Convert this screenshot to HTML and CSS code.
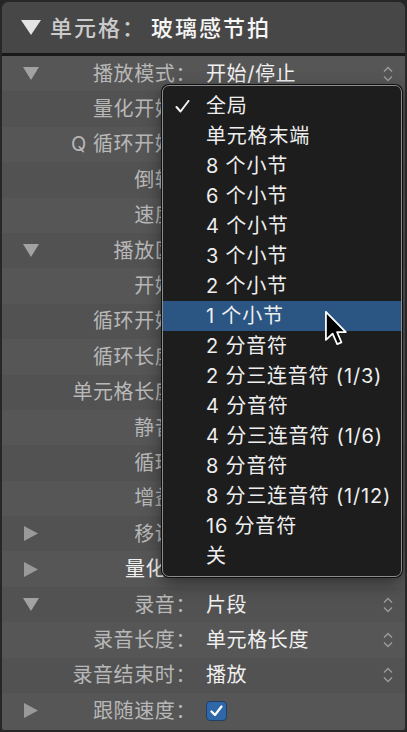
FILE: index.html
```html
<!DOCTYPE html>
<html lang="zh-CN">
<head>
<meta charset="utf-8">
<title>单元格检查器</title>
<link rel="stylesheet" href="styles.css">
</head>
<body>
<div class="panel">
  <div class="header">
    <svg class="h-tri" width="20" height="15" viewBox="0 0 20 15"><polygon points="0,0 20,0 10,15"/></svg>
    <span class="h-label">单元格：</span>
    <span class="h-value">玻璃感节拍</span>
  </div>
  <div class="rows">
    <div class="row"><span class="disc"><svg class="tri-down" width="16" height="13" viewBox="0 0 16 13"><polygon points="0,0 16,0 8,13"/></svg></span><span class="label">播放模式：</span><span class="value">开始/停止</span><span class="updown"><svg width="10" height="18" viewBox="0 0 10 18"><path d="M1 6.5 L5 2.5 L9 6.5 M1 11.5 L5 15.5 L9 11.5"/></svg></span></div>
    <div class="row"><span class="disc"></span><span class="label">量化开始：</span><span class="value"></span><span class="updown"></span></div>
    <div class="row"><span class="disc"></span><span class="label">Q 循环开始：</span><span class="value"></span><span class="updown"></span></div>
    <div class="row"><span class="disc"></span><span class="label">倒转：</span><span class="value"></span><span class="updown"></span></div>
    <div class="row"><span class="disc"></span><span class="label">速度：</span><span class="value"></span><span class="updown"></span></div>
    <div class="row"><span class="disc"><svg class="tri-down" width="16" height="13" viewBox="0 0 16 13"><polygon points="0,0 16,0 8,13"/></svg></span><span class="label">播放区：</span><span class="value"></span><span class="updown"></span></div>
    <div class="row"><span class="disc"></span><span class="label">开始：</span><span class="value"></span><span class="updown"></span></div>
    <div class="row"><span class="disc"></span><span class="label">循环开始：</span><span class="value"></span><span class="updown"></span></div>
    <div class="row"><span class="disc"></span><span class="label">循环长度：</span><span class="value"></span><span class="updown"></span></div>
    <div class="row"><span class="disc"></span><span class="label">单元格长度：</span><span class="value"></span><span class="updown"></span></div>
    <div class="row"><span class="disc"></span><span class="label">静音：</span><span class="value"></span><span class="updown"></span></div>
    <div class="row"><span class="disc"></span><span class="label">循环：</span><span class="value"></span><span class="updown"></span></div>
    <div class="row"><span class="disc"></span><span class="label">增益：</span><span class="value"></span><span class="updown"></span></div>
    <div class="row"><span class="disc"><svg class="tri-right" width="14" height="15" viewBox="0 0 14 15"><polygon points="0,0 14,7.5 0,15"/></svg></span><span class="label">移调：</span><span class="value"></span><span class="updown"></span></div>
    <div class="row"><span class="disc"><svg class="tri-right" width="14" height="15" viewBox="0 0 14 15"><polygon points="0,0 14,7.5 0,15"/></svg></span><span class="label label-group">量化</span><span class="value"></span><span class="updown"><svg width="10" height="18" viewBox="0 0 10 18"><path d="M1 6.5 L5 2.5 L9 6.5 M1 11.5 L5 15.5 L9 11.5"/></svg></span></div>
    <div class="row"><span class="disc"><svg class="tri-down" width="16" height="13" viewBox="0 0 16 13"><polygon points="0,0 16,0 8,13"/></svg></span><span class="label">录音：</span><span class="value">片段</span><span class="updown"><svg width="10" height="18" viewBox="0 0 10 18"><path d="M1 6.5 L5 2.5 L9 6.5 M1 11.5 L5 15.5 L9 11.5"/></svg></span></div>
    <div class="row"><span class="disc"></span><span class="label">录音长度：</span><span class="value">单元格长度</span><span class="updown"><svg width="10" height="18" viewBox="0 0 10 18"><path d="M1 6.5 L5 2.5 L9 6.5 M1 11.5 L5 15.5 L9 11.5"/></svg></span></div>
    <div class="row"><span class="disc"></span><span class="label">录音结束时：</span><span class="value">播放</span><span class="updown"><svg width="10" height="18" viewBox="0 0 10 18"><path d="M1 6.5 L5 2.5 L9 6.5 M1 11.5 L5 15.5 L9 11.5"/></svg></span></div>
    <div class="row"><span class="disc"><svg class="tri-right" width="14" height="15" viewBox="0 0 14 15"><polygon points="0,0 14,7.5 0,15"/></svg></span><span class="label">跟随速度：</span><span class="value"><span class="checkbox"><svg width="13" height="12" viewBox="0 0 13 12"><path d="M1.5 6.5 L5 10 L11.5 1.5"/></svg></span></span><span class="updown"></span></div>
  </div>

  <div class="menu">
    <div class="item"><span class="check"><svg width="15" height="13" viewBox="0 0 15 13"><path d="M1.5 7 L5.5 11.5 L13.5 1"/></svg></span><span>全局</span></div>
    <div class="item"><span class="check"></span><span>单元格末端</span></div>
    <div class="item"><span class="check"></span><span>8 个小节</span></div>
    <div class="item"><span class="check"></span><span>6 个小节</span></div>
    <div class="item"><span class="check"></span><span>4 个小节</span></div>
    <div class="item"><span class="check"></span><span>3 个小节</span></div>
    <div class="item"><span class="check"></span><span>2 个小节</span></div>
    <div class="item selected"><span class="check"></span><span>1 个小节</span></div>
    <div class="item"><span class="check"></span><span>2 分音符</span></div>
    <div class="item"><span class="check"></span><span>2 分三连音符 (1/3)</span></div>
    <div class="item"><span class="check"></span><span>4 分音符</span></div>
    <div class="item"><span class="check"></span><span>4 分三连音符 (1/6)</span></div>
    <div class="item"><span class="check"></span><span>8 分音符</span></div>
    <div class="item"><span class="check"></span><span>8 分三连音符 (1/12)</span></div>
    <div class="item"><span class="check"></span><span>16 分音符</span></div>
    <div class="item"><span class="check"></span><span>关</span></div>
  </div>

  <svg class="cursor" width="25" height="37" viewBox="-1 -1 14 21"><path d="M0 0 L0 16 L3.8 12.4 L6.4 18.4 L8.8 17.4 L6.3 11.5 L11.3 11.5 Z"/></svg>
</div>
</body>
</html>
```

FILE: styles.css
```css
html, body {
  margin: 0;
  padding: 0;
  background: #262626;
}

body {
  font-family: Inter, "Noto Sans CJK SC", sans-serif;
}

.panel {
  position: relative;
  width: 407px;
  height: 732px;
  box-sizing: border-box;
  border: 2px solid #272727;
  border-radius: 9px 9px 4px 4px;
  background: #555555;
  overflow: hidden;
  display: flex;
  flex-direction: column;
}

.header {
  height: 51px;
  flex: none;
  background: #474747;
  border-bottom: 3px solid #181818;
  display: flex;
  align-items: center;
  padding-left: 19px;
  font-size: 22px;
  font-weight: 500;
  line-height: 26px;
  letter-spacing: 2px;
}

.h-tri {
  fill: #e4e4e4;
  margin-right: 9px;
  flex: none;
}

.h-label {
  color: #cbcbcb;
}

.h-value {
  color: #f6f6f6;
  margin-left: 5px;
}

.rows {
  display: flex;
  flex-direction: column;
}

.row {
  height: 35.4px;
  display: grid;
  grid-template-columns: 58px 136px 1fr 24px;
  align-items: center;
  padding-right: 5px;
  font-size: 20px;
  line-height: 24px;
  letter-spacing: 0.6px;
  background: #565656;
}

.row:nth-child(even) {
  background: #525252;
}

.disc {
  display: flex;
  justify-content: center;
  align-items: center;
}

.tri-down {
  fill: #a2a2a2;
}

.tri-right {
  fill: #9a9a9a;
}

.label {
  color: #b8b8b8;
  text-align: right;
  white-space: nowrap;
}

.label-group {
  text-align: left;
  padding-left: 65px;
  color: #f0f0f0;
}

.value {
  color: #f0f0f0;
  padding-left: 10px;
  white-space: nowrap;
  display: flex;
  align-items: center;
}

.updown {
  display: flex;
  justify-content: center;
  align-items: center;
}

.updown svg {
  fill: none;
  stroke: #9c9c9c;
  stroke-width: 1.4;
}

.checkbox {
  width: 21px;
  height: 20px;
  box-sizing: border-box;
  border-radius: 4px;
  background: #2f67a8;
  border: 1px solid #1f3f63;
  display: flex;
  align-items: center;
  justify-content: center;
}

.checkbox svg {
  fill: none;
  stroke: #ffffff;
  stroke-width: 2.2;
  stroke-linecap: round;
  stroke-linejoin: round;
}

.menu {
  position: absolute;
  left: 160px;
  top: 83px;
  width: 240px;
  box-sizing: border-box;
  padding: 5px 0;
  background: #1d1d1d;
  border: 1px solid #8c8c8c;
  border-radius: 7px;
  box-shadow: 0 0 0 1px #101010, 0 6px 18px rgba(0, 0, 0, 0.45);
}

.item {
  height: 30px;
  display: grid;
  grid-template-columns: 43px 1fr;
  align-items: center;
  color: #eeeeee;
  font-size: 20px;
  line-height: 24px;
  letter-spacing: 0.8px;
  white-space: nowrap;
}

.item.selected {
  background: #2b5583;
}

.check {
  display: flex;
  align-items: center;
  padding-left: 12px;
}

.check svg {
  fill: none;
  stroke: #f2f2f2;
  stroke-width: 2;
  stroke-linecap: round;
  stroke-linejoin: round;
}

.cursor {
  position: absolute;
  left: 322px;
  top: 308px;
}

.cursor path {
  fill: #000000;
  stroke: #ffffff;
  stroke-width: 1;
  stroke-linejoin: round;
}
```
